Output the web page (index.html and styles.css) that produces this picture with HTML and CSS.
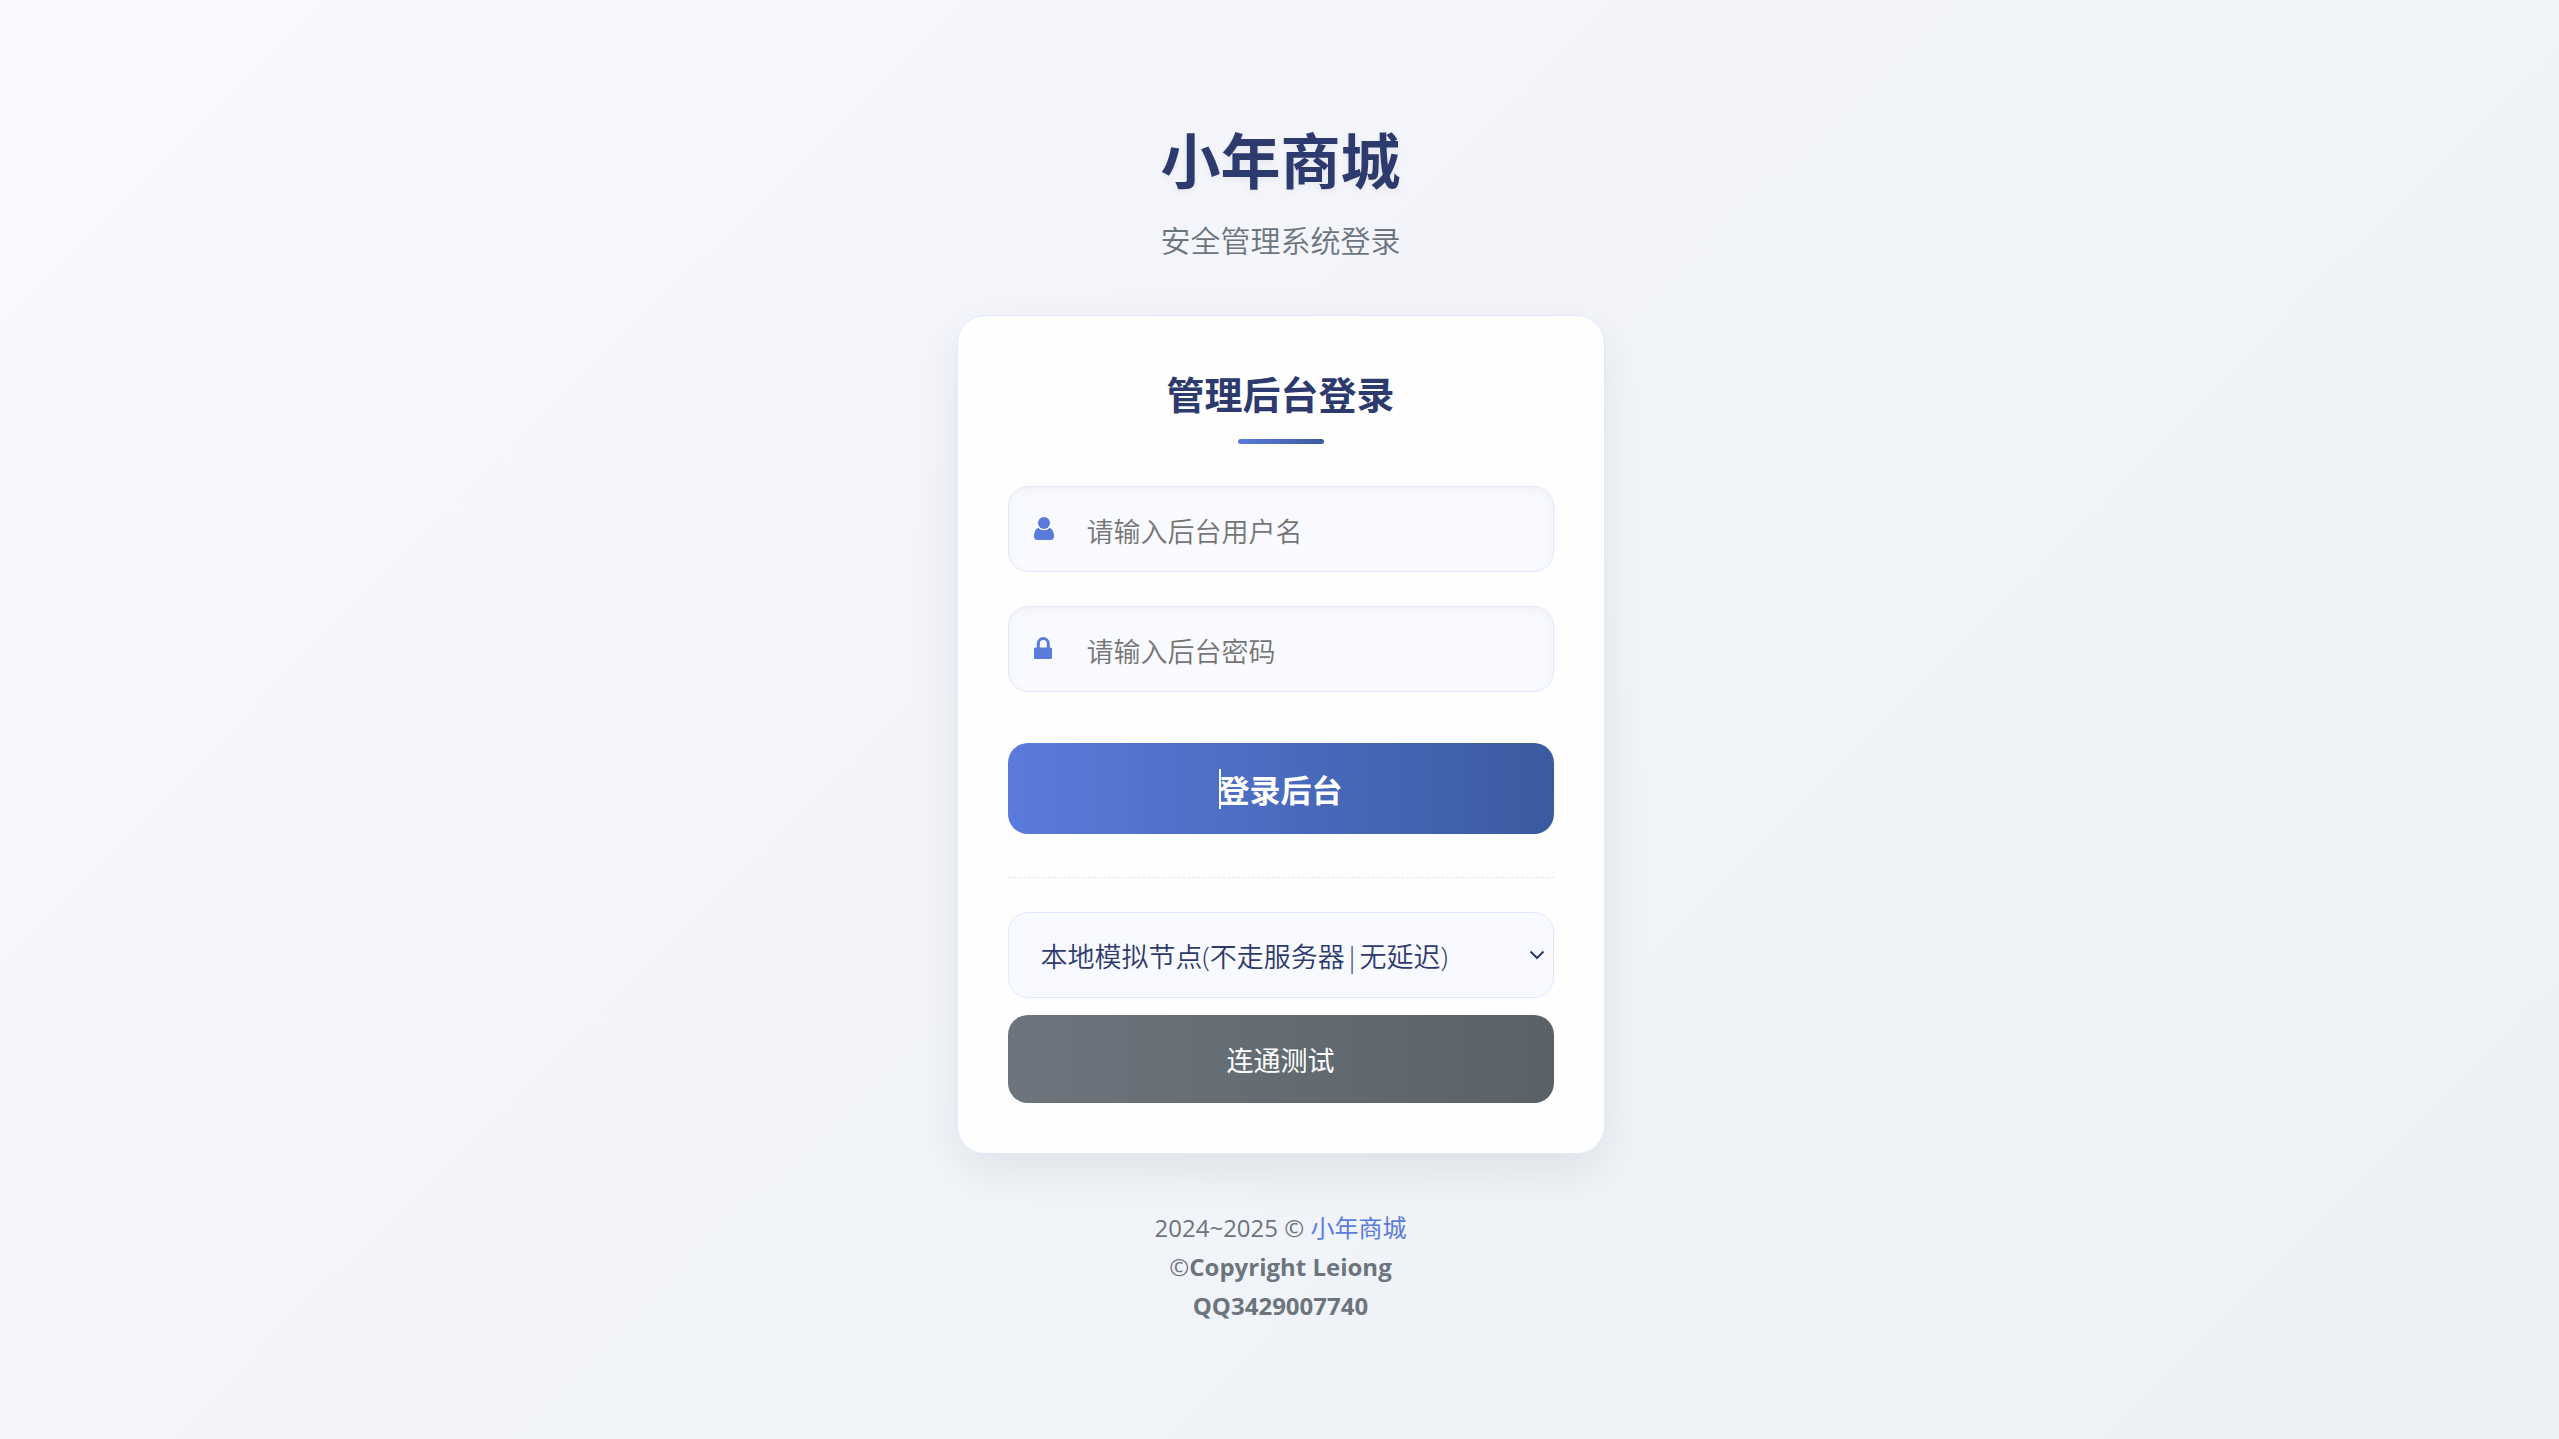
FILE: index.html
```html
<!DOCTYPE html>
<html lang="zh-CN">
<head>
  <meta charset="UTF-8">
  <meta name="viewport" content="width=device-width, initial-scale=1">
  <title>小年商城 - 管理后台登录</title>
  <link rel="stylesheet" href="styles.css">
</head>
<body>
  <header class="header">
    <h1>小年商城</h1>
    <p>安全管理系统登录</p>
  </header>

  <main class="login-card">
    <h2>管理后台登录</h2>

    <form id="loginForm">
      <div class="form-group">
        <label for="username" aria-label="用户名">
          <svg class="icon" viewBox="0 0 24 28">
            <circle cx="12" cy="8" r="6"/>
            <path d="M6.500 13C9.500 16 14.500 16 17.500 13C20.500 13.500 22 17.500 22 21.500C22 23.700 20.700 25 19 25H5C3.300 25 2 23.700 2 21.500C2 17.500 3.500 13.500 6.500 13z"/>
          </svg>
        </label>
        <input type="text" id="username" name="username" placeholder="请输入后台用户名">
      </div>
      <div class="form-group">
        <label for="password" aria-label="密码">
          <svg class="icon" viewBox="0 0 24 28">
            <path class="shackle" d="M6.300 13V8.500a5 5 0 0 1 10 0V13"/>
            <rect x="2" y="12.500" width="18" height="11.500" rx="1.500"/>
          </svg>
        </label>
        <input type="password" id="password" name="password" placeholder="请输入后台密码">
      </div>
      <button type="submit" class="login-button"><span class="caret"></span>登录后台</button>
    </form>

    <div class="node-test">
      <select id="node" aria-label="节点">
        <option>本地模拟节点(不走服务器|无延迟)</option>
      </select>
      <button type="button" class="test-button">连通测试</button>
    </div>
  </main>

  <footer class="footer">
    <p>2024~2025 © <a href="#">小年商城</a></p>
    <p>©<strong>Copyright Leiong</strong></p>
    <p><strong>QQ3429007740</strong></p>
  </footer>
</body>
</html>
```
FILE: styles.css
```css
* {
  box-sizing: border-box;
  margin: 0;
  padding: 0;
}
body {
  font-family: "Open Sans", "Noto Sans CJK SC", sans-serif;
  background: linear-gradient(135deg, #f8faff 0%, #f4f5fa 40%, #f0f4f8 65%, #edf0f5 100%);
  min-height: 100vh;
  padding: 8px 0 0 2px;
  display: flex;
  flex-direction: column;
  align-items: center;
  justify-content: center;
  color: #2d3a6e;
}
.header {
  text-align: center;
  margin-bottom: 54px;
}
.header h1 {
  font-size: 60px;
  line-height: 78px;
  margin-bottom: 21px;
  text-shadow: 0 3px 7px rgba(0,0,0,0.06);
}
.header p {
  font-size: 30px;
  line-height: 40px;
  color: #6c757d;
  font-weight: 350;
}
.login-card {
  width: 100%;
  max-width: 648px;
  padding: 50px;
  background: linear-gradient(135deg, #fff 0%, #fefefe 100%);
  border: 1px solid #e0e7ff;
  border-radius: 28px;
  box-shadow: 0 17px 51px rgba(0,0,0,0.08);
}
.login-card h2 {
  font-size: 38px;
  line-height: 56px;
  text-align: center;
  margin-bottom: 42px;
}
.login-card h2::after {
  content: "";
  display: block;
  width: 86px;
  height: 5px;
  margin: 17px auto 0;
  border-radius: 3px;
  background: linear-gradient(135deg, #5a7bdc, #3a5ba0);
}
.form-group {
  display: flex;
  align-items: center;
  height: 86px;
  margin-bottom: 34px;
  background: #f9faff;
  border: 1px solid #e0e7ff;
  border-radius: 20px;
  box-shadow: inset 0 3px 9px rgba(0,0,0,0.04);
}
.form-group label {
  display: flex;
  padding-left: 23px;
}
.icon {
  width: 24px;
  height: 28px;
  fill: #5a7bdc;
}
.icon .shackle {
  fill: none;
  stroke: #5a7bdc;
  stroke-width: 3;
}
.form-group input {
  flex: 1;
  min-width: 0;
  height: 100%;
  padding: 4px 24px 0 31px;
  border: none;
  outline: none;
  background: transparent;
  font-family: inherit;
  font-size: 27px;
  font-weight: 350;
  color: #2d3a6e;
}
.form-group input::placeholder {
  color: #757575;
}
.login-button,
.test-button {
  display: flex;
  align-items: center;
  justify-content: center;
  width: 100%;
  border: none;
  border-radius: 20px;
  color: white;
  font-family: inherit;
  cursor: pointer;
}
.login-button {
  height: 91px;
  margin-top: 51px;
  background: linear-gradient(to right, #5a7bdc, #3a5ba0);
  font-size: 31px;
  font-weight: bold;
}
.caret {
  width: 2px;
  height: 40px;
  margin-right: -2px;
  background: white;
}
.node-test {
  margin-top: 43px;
  padding-top: 34px;
  border-top: 1px dashed #e0e7ff;
}
.node-test select {
  appearance: none;
  display: block;
  width: 100%;
  height: 86px;
  padding: 2px 32px 0;
  margin-bottom: 17px;
  border: 1px solid #e0e7ff;
  border-radius: 20px;
  background: #f9faff url("data:image/svg+xml,%3Csvg xmlns='http://www.w3.org/2000/svg' viewBox='0 0 16 10'%3E%3Cpath d='M1.500 1.500 8 8l6.500-6.500' fill='none' stroke='%232d3a6e' stroke-width='2'/%3E%3C/svg%3E") no-repeat right 8px center / 16px 10px;
  color: #2d3a6e;
  font-family: inherit;
  font-size: 27px;
  font-weight: 350;
}
.test-button {
  height: 88px;
  background: linear-gradient(to right, #6c757d, #5a6268);
  font-size: 27px;
}
.footer {
  margin-top: 54px;
  text-align: center;
  font-size: 24px;
  line-height: 39px;
  color: #6c757d;
}
.footer a {
  color: #5a7bdc;
  text-decoration: none;
}
```
